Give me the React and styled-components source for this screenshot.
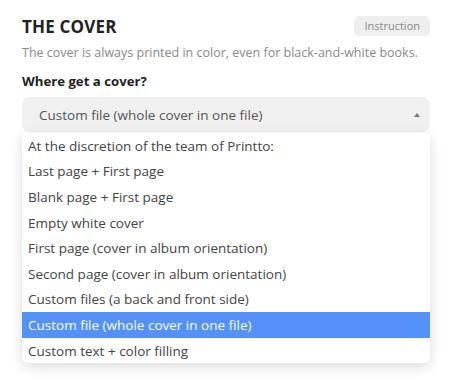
import React from 'react';
import styled, {createGlobalStyle} from 'styled-components';

const Global = createGlobalStyle`
    body {
        margin: 0;
        background: #ffffff;
        font-family: "Open Sans", sans-serif;
    }
`;

const Screen = styled.div`
    width: 455px;
    height: 386px;
    padding: 15px 25px 0 22px;
    box-sizing: border-box;
`;

const Header = styled.div`
    display: flex;
    justify-content: space-between;
    align-items: center;
    height: 22px;
`;

const Title = styled.h2`
    margin: 0;
    font-size: 17px;
    font-weight: 700;
    color: #222222;
    letter-spacing: 0.2px;
`;

const Badge = styled.span`
    background: #eeeeee;
    color: #888888;
    font-size: 11px;
    border-radius: 5px;
    padding: 3px 10px;
    line-height: 14px;
`;

const Note = styled.p`
    margin: 8px 0 0;
    font-size: 12.5px;
    color: #8a8a8a;
    line-height: 16px;
`;

const Label = styled.p`
    margin: 11px 0 0;
    font-size: 13.2px;
    font-weight: 700;
    color: #222222;
    line-height: 18px;
`;

const Field = styled.div`
    margin-top: 7px;
    position: relative;
`;

const Select = styled.div`
    height: 35px;
    background: #f0f0f0;
    border-radius: 8px;
    display: flex;
    align-items: center;
    justify-content: space-between;
    padding: 0 10px 0 17px;
    font-size: 13.5px;
    color: #555555;
`;

const Arrow = styled.span`
    width: 0;
    height: 0;
    border-left: 3.5px solid transparent;
    border-right: 3.5px solid transparent;
    border-bottom: 4px solid #777777;
`;

const Menu = styled.ul`
    list-style: none;
    margin: 1px 0 0;
    padding: 0;
    background: #ffffff;
    border-radius: 0 0 5px 5px;
    box-shadow: 0 4px 14px rgba(0, 0, 0, 0.14);
`;

const Option = styled.li`
    height: 25.6px;
    display: flex;
    align-items: center;
    padding: 0 6px;
    font-size: 13.5px;
    color: ${p => (p.$active ? '#ffffff' : '#444444')};
    background: ${p => (p.$active ? '#5591f8' : 'transparent')};
`;

const options = [
    'At the discretion of the team of Printto:',
    'Last page + First page',
    'Blank page + First page',
    'Empty white cover',
    'First page (cover in album orientation)',
    'Second page (cover in album orientation)',
    'Custom files (a back and front side)',
    'Custom file (whole cover in one file)',
    'Custom text + color filling',
];

export default function App() {
    const selected = 'Custom file (whole cover in one file)';
    return (
        <Screen>
            <Global />
            <Header>
                <Title>THE COVER</Title>
                <Badge>Instruction</Badge>
            </Header>
            <Note>The cover is always printed in color, even for black-and-white books.</Note>
            <Label>Where get a cover?</Label>
            <Field>
                <Select>
                    {selected}
                    <Arrow />
                </Select>
                <Menu>
                    {options.map(o => (
                        <Option key={o} $active={o === selected}>{o}</Option>
                    ))}
                </Menu>
            </Field>
        </Screen>
    );
}
